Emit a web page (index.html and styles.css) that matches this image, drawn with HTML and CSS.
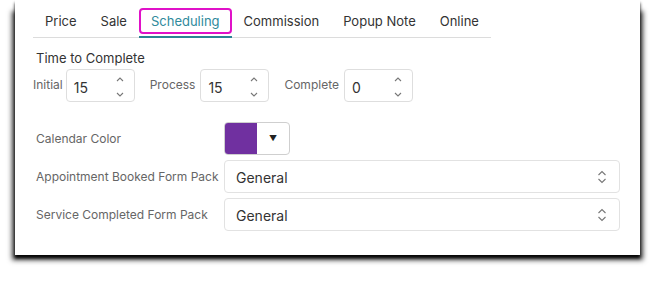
FILE: index.html
```html
<!DOCTYPE html>
<html>
<head>
<meta charset="utf-8">
<link rel="stylesheet" href="styles.css">
</head>
<body>
<div class="panel">
  <ul class="tabs">
    <li class="tab"><span class="tab-label">Price</span></li>
    <li class="tab"><span class="tab-label">Sale</span></li>
    <li class="tab active"><span class="tab-label">Scheduling</span></li>
    <li class="tab"><span class="tab-label">Commission</span></li>
    <li class="tab"><span class="tab-label">Popup Note</span></li>
    <li class="tab"><span class="tab-label">Online</span></li>
  </ul>

  <div class="section-title">Time to Complete</div>
  <div class="times">
    <label class="time-label">Initial</label>
    <div class="num"><span class="num-val">15</span><span class="spin"><svg width="8" height="24" viewBox="0 0 8 24"><path d="M1 7 L4 4 L7 7" /><path d="M1 19 L4 22 L7 19" /></svg></span></div>
    <label class="time-label gap">Process</label>
    <div class="num"><span class="num-val">15</span><span class="spin"><svg width="8" height="24" viewBox="0 0 8 24"><path d="M1 7 L4 4 L7 7" /><path d="M1 19 L4 22 L7 19" /></svg></span></div>
    <label class="time-label gap">Complete</label>
    <div class="num"><span class="num-val">0</span><span class="spin"><svg width="8" height="24" viewBox="0 0 8 24"><path d="M1 7 L4 4 L7 7" /><path d="M1 19 L4 22 L7 19" /></svg></span></div>
  </div>

  <div class="form">
    <div class="f-label">Calendar Color</div>
    <div class="color-pick"><span class="swatch"></span><span class="caret">&#9660;</span></div>
    <div class="f-label">Appointment Booked Form Pack</div>
    <div class="select"><span>General</span><svg class="chev" width="10" height="14" viewBox="0 0 10 14"><path d="M1.5 5 L5 1.5 L8.5 5" /><path d="M1.5 9 L5 12.5 L8.5 9" /></svg></div>
    <div class="f-label">Service Completed Form Pack</div>
    <div class="select"><span>General</span><svg class="chev" width="10" height="14" viewBox="0 0 10 14"><path d="M1.5 5 L5 1.5 L8.5 5" /><path d="M1.5 9 L5 12.5 L8.5 9" /></svg></div>
  </div>
</div>
</body>
</html>
```

FILE: styles.css
```css
html, body {
  margin: 0;
  padding: 0;
  background: #fff;
}
body {
  font-family: Inter, "Noto Sans", sans-serif;
  width: 654px;
  height: 286px;
  overflow: hidden;
}
.panel {
  box-sizing: border-box;
  position: relative;
  z-index: 0;
  margin: 0 0 0 15px;
  width: 625px;
  height: 255px;
  background: #fff;
  box-shadow: 0 3px 3px rgba(0,0,0,0.95);
  padding: 8px 0 0 18px;
}
.panel::before {
  content: "";
  position: absolute;
  left: 0;
  right: 0;
  top: 12px;
  bottom: 0;
  z-index: -1;
  box-shadow: 0 2px 5px 3px rgba(0,0,0,0.75);
}
.panel::after {
  content: "";
  position: absolute;
  inset: 0;
  background: #fff;
  z-index: -1;
}
.tabs {
  list-style: none;
  margin: 0;
  padding: 0;
  display: inline-flex;
  border-bottom: 1px solid #dcdcdc;
}
.tab {
  padding-bottom: 2px;
  margin-bottom: -1px;
  border-bottom: 2px solid transparent;
}
.tab-label {
  display: block;
  padding: 2px 10px;
  line-height: 18px;
  font-size: 13px;
  color: #333;
  border: 2px solid transparent;
  border-radius: 4px;
}
.tab.active {
  border-bottom-color: #2b8394;
}
.tab.active .tab-label {
  border-color: #e011c8;
  color: #2f8a9c;
}
.section-title {
  margin: 12px 0 0 3px;
  font-size: 13px;
  line-height: 16px;
  color: #333;
}
.times {
  display: flex;
  align-items: center;
  margin-top: 3px;
}
.time-label {
  font-size: 12px;
  color: #666;
  margin-right: 3px;
  position: relative;
  top: -1px;
}
.time-label.gap {
  margin-left: 15px;
  margin-right: 5px;
}
.num {
  box-sizing: border-box;
  width: 69px;
  height: 33px;
  border: 1px solid #dedede;
  border-radius: 4px;
  display: flex;
  align-items: center;
  justify-content: space-between;
  padding: 0 10px 0 7px;
}
.num-val {
  font-size: 14px;
  color: #333;
  position: relative;
  top: 2px;
}
.spin svg {
  display: block;
}
.spin path, .chev path {
  fill: none;
  stroke: #777;
  stroke-width: 1.1;
}
.form {
  display: grid;
  grid-template-columns: 188px 396px;
  grid-auto-rows: 33px;
  row-gap: 5px;
  margin-top: 20px;
  margin-left: 3px;
}
.f-label {
  font-size: 12px;
  color: #666;
  display: flex;
  align-items: center;
  margin-top: -1px;
}
.color-pick {
  box-sizing: border-box;
  width: 66px;
  height: 33px;
  border: 1px solid #cfcfcf;
  border-radius: 4px;
  display: flex;
  overflow: hidden;
}
.swatch {
  width: 32px;
  background: #7030a0;
}
.caret {
  flex: 1;
  text-align: center;
  font-size: 8px;
  line-height: 31px;
  color: #222;
}
.select {
  box-sizing: border-box;
  height: 33px;
  border: 1px solid #e2e2e2;
  border-radius: 4px;
  display: flex;
  align-items: center;
  justify-content: space-between;
  padding: 0 12px 0 11px;
  font-size: 14px;
  color: #333;
}
.select span {
  position: relative;
  top: 1px;
}
```
